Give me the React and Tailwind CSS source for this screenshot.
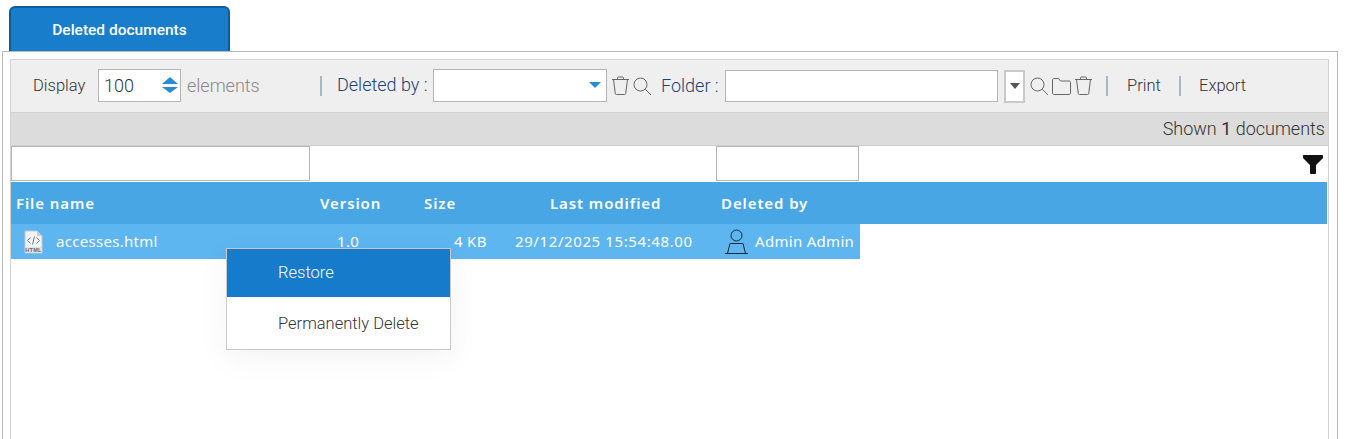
const roboto = { fontFamily: "Roboto, sans-serif" };
const tableFont = { fontFamily: '"Noto Sans", sans-serif' };

function Trash({ className = "" }) {
  return (
    <svg className={className} width="19" height="20" viewBox="0 0 19 20" fill="none" stroke="#666" strokeWidth="1">
      <path d="M1 3.500h17M6.500 3.500V2c0-.6.4-1 1-1h4c.6 0 1 .4 1 1v1.500M2.500 3.500 4.300 17.500c.1.700.5 1 1.100 1h8.200c.6 0 1-.3 1.100-1l1.800-14" />
    </svg>
  );
}

function Search({ className = "" }) {
  return (
    <svg className={className} width="19" height="19" viewBox="0 0 19 19" fill="none" stroke="#666" strokeWidth="1">
      <circle cx="7.500" cy="7.500" r="6.500" />
      <path d="M12.300 12.300 18 18" />
    </svg>
  );
}

function Folder({ className = "" }) {
  return (
    <svg className={className} width="19" height="17" viewBox="0 0 19 17" fill="none" stroke="#666" strokeWidth="1">
      <path d="M.5 15V2c0-.8.5-1.500 1.300-1.500h4.700L8.500 3h8.700c.8 0 1.300.5 1.300 1.300V15c0 .8-.5 1.500-1.300 1.500H1.800C1 16.500.5 15.800.5 15Z" />
    </svg>
  );
}

function Separator({ className = "" }) {
  return <div className={`h-5 w-0.5 shrink-0 bg-[#a9b8c6] ${className}`} />;
}

function HtmlIcon() {
  return (
    <svg width="19" height="24" viewBox="0 0 19 24" className="ml-[13px] shrink-0">
      <path d="M1 1h12l5 5v17H1Z" fill="#f1f3f4" stroke="#c5cacd" />
      <path d="M13 1v5h5Z" fill="#c9ced1" />
      <path d="M6.500 7.500 3.500 10.500l3 3M12.500 7.500l3 3-3 3M10.500 6.500l-2 8" fill="none" stroke="#6d7b84" strokeWidth="1" />
      <rect x="2" y="17" width="15" height="5" fill="#dfe3e5" />
      <text x="9.500" y="21.500" textAnchor="middle" fontSize="5.500" fontWeight="700" fill="#5f6b73" fontFamily="Liberation Sans, sans-serif">HTML</text>
    </svg>
  );
}

function PersonIcon() {
  return (
    <svg width="25" height="26" viewBox="0 0 25 26" fill="none" stroke="#10263d" strokeWidth="1" className="shrink-0">
      <circle cx="12.500" cy="6.500" r="5.500" />
      <path d="M6 14.500h13l2.500 10h-18ZM1 24.500h23" />
    </svg>
  );
}

export default function App() {
  return (
    <div className="h-[439px] w-[1346px] overflow-hidden bg-white" style={roboto}>
      {/* Tab */}
      <div className="ml-[9px] mt-[6px] flex h-[46px] w-[221px] items-center justify-center rounded-t-md border-[2px] border-b-0 border-[#0b5c9c] bg-[#187dcb] pt-[2px] text-[15.5px] font-medium text-white">
        Deleted documents
      </div>

      <div className="ml-[2px] -mt-px h-[400px] w-[1336px] border border-[#b9b9b9] border-b-0 pl-[7px] pt-[7px]">
        <div className="h-[400px] w-[1319px] border-x border-[#d3d3d3]">
          {/* Toolbar */}
          <div className="flex h-[54px] items-center border-y border-[#d3d3d3] bg-[#efefef] text-[16.5px] font-light">
            <span className="ml-[22px] w-[53px] text-[#333]">Display</span>
            <div className="mb-[2px] ml-[12px] flex h-[33px] w-[83px] items-center justify-between border border-[#b5b5b5] bg-white pl-[5px] pr-[1px] text-[18px] font-light text-[#333]">
              100
              <div className="mr-[1px] flex flex-col gap-[3px]">
                <div className="h-0 w-0 border-x-[8px] border-b-[7px] border-x-transparent border-b-[#2a8ad5]" />
                <div className="h-0 w-0 border-x-[8px] border-t-[6px] border-x-transparent border-t-[#2a8ad5]" />
              </div>
            </div>
            <span className="mb-[2px] ml-[6px] w-[133px] text-[18px] text-[#8a8a8a]">elements</span>
            <Separator />
            <span className="mb-[4px] ml-[15px] w-[96px] text-[18px] font-light text-[#1d4272]">Deleted by :</span>
            <div className="mb-[2px] flex h-[33px] w-[174px] shrink-0 items-center justify-end border border-[#b5b5b5] bg-white pr-[5px]">
              <div className="h-0 w-0 border-x-[6px] border-t-[6px] border-x-transparent border-t-[#2a8ad5]" />
            </div>
            <Trash className="ml-[4px] shrink-0" />
            <Search className="ml-[3px] shrink-0" />
            <span className="mb-[2px] ml-[9px] w-[64px] text-[18px] font-light text-[#1d4272]">Folder :</span>
            <div className="h-[32px] w-[273px] shrink-0 border border-[#b5b5b5] bg-white" />
            <div className="ml-[6px] flex h-[33px] w-[21px] shrink-0 items-center justify-center border-2 border-[#c9c9c9] bg-white">
              <div className="h-0 w-0 border-x-[5px] border-t-[6px] border-x-transparent border-t-[#555]" />
            </div>
            <Search className="ml-[5px] shrink-0" />
            <Folder className="ml-[3px] shrink-0" />
            <Trash className="ml-[3px] shrink-0" />
            <Separator className="ml-[13px]" />
            <span className="ml-[19px] w-[34px] text-[#333]">Print</span>
            <Separator className="ml-[18px]" />
            <span className="ml-[18px] text-[#333]">Export</span>
          </div>

          {/* Count bar */}
          <div className="flex h-[33px] items-center justify-end border-b border-[#cfcfcf] bg-[#dcdcdc] pb-[2px] pr-[3px] text-[18px] font-light text-[#333]">
            Shown&nbsp;<span className="font-normal">1</span>&nbsp;documents
          </div>

          {/* Filters */}
          <div className="flex h-[36px]">
            <div className="h-[35px] w-[299px] border border-[#b5b5b5] bg-white" />
            <div className="ml-[406px] h-[35px] w-[143px] border border-[#b5b5b5] bg-white" />
            <svg width="20" height="19" viewBox="0 0 20 19" className="ml-auto mr-[5px] mt-[9px]">
              <path d="M1 0h18c.6 0 1 .4 1 1v2l-7 7v8c0 .5-.5 1-1 1H8c-.5 0-1-.5-1-1v-8L0 3V1c0-.6.4-1 1-1Z" fill="#111" />
            </svg>
          </div>

          {/* Table */}
          <div className="w-[1316px]" style={tableFont}>
            <div className="flex h-[42px] items-center bg-[#47a6e3] text-[15px] font-semibold tracking-[0.9px] text-white">
              <span className="ml-[5px] w-[304px]">File name</span>
              <span className="w-[104px]">Version</span>
              <span className="w-[126px]">Size</span>
              <span className="w-[171px]">Last modified</span>
              <span>Deleted by</span>
            </div>
            <div className="flex h-[35px] w-[849px] items-center bg-[#5db6f0] text-[15px] tracking-[0.3px] text-white">
              <HtmlIcon />
              <span className="ml-[13px] w-[281px]">accesses.html</span>
              <span className="w-[117px]">1.0</span>
              <span className="w-[61px]">4 KB</span>
              <span className="w-[209px] whitespace-nowrap tracking-[0.6px]">29/12/2025 15:54:48.00</span>
              <PersonIcon />
              <span className="ml-[6px] whitespace-nowrap">Admin Admin</span>
            </div>
          </div>
        </div>
      </div>

      {/* Context menu */}
      <div className="absolute left-[226px] top-[248px] h-[102px] w-[225px] border border-[#c9c9c9] bg-white text-[16.5px] font-light text-[#333] shadow-[0_8px_30px_rgba(0,0,0,0.05)]">
        <div className="flex h-[48px] items-center bg-[#167bca] pl-[51px] pt-px text-white">Restore</div>
        <div className="flex h-[52px] items-center pl-[51px] pt-[2px]">Permanently Delete</div>
      </div>
    </div>
  );
}
